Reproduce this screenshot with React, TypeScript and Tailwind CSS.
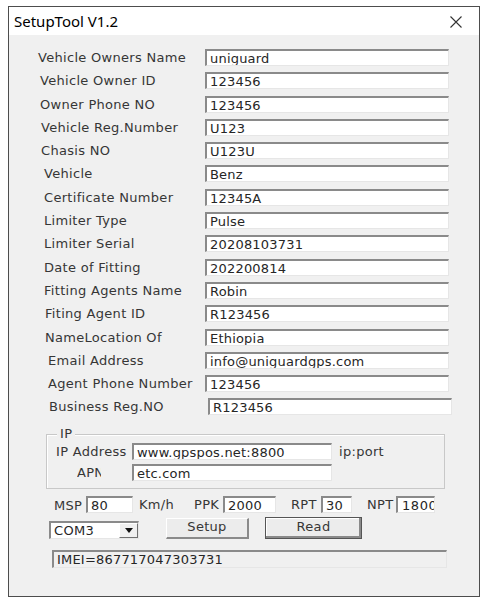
import React from 'react';

const rows: { label: string; value: string; pl: number }[] = [
  { label: 'Vehicle Owners Name', value: 'uniguard', pl: 29 },
  { label: 'Vehicle Owner ID', value: '123456', pl: 31 },
  { label: 'Owner Phone NO', value: '123456', pl: 31 },
  { label: 'Vehicle Reg.Number', value: 'U123', pl: 32 },
  { label: 'Chasis NO', value: 'U123U', pl: 32 },
  { label: 'Vehicle', value: 'Benz', pl: 35 },
  { label: 'Certificate Number', value: '12345A', pl: 35 },
  { label: 'Limiter Type', value: 'Pulse', pl: 35 },
  { label: 'Limiter Serial', value: '20208103731', pl: 35 },
  { label: 'Date of Fitting', value: '202200814', pl: 35 },
  { label: 'Fitting Agents Name', value: 'Robin', pl: 35 },
  { label: 'Fiting Agent ID', value: 'R123456', pl: 36 },
  { label: 'NameLocation Of', value: 'Ethiopia', pl: 36 },
  { label: 'Email Address', value: 'info@uniguardgps.com', pl: 39 },
  { label: 'Agent Phone Number', value: '123456', pl: 39 },
  { label: 'Business Reg.NO', value: 'R123456', pl: 40 }
];

const font = { fontFamily: '"DejaVu Sans", Verdana, sans-serif' };

function Field({ value, className = '', gray = false }: { value: string; className?: string; gray?: boolean }) {
  return (
    <div
      className={`h-[17px] shrink-0 overflow-hidden whitespace-nowrap border-t-2 border-l-2 border-t-[#8a8a8a] border-l-[#8a8a8a] border-r border-b border-r-[#e6e6e6] border-b-[#e6e6e6] pl-[3px] text-[13px] leading-[15px] tracking-[0.2px] text-[#262626] ${
        gray ? 'bg-[#f0f0f0]' : 'bg-white'
      } ${className}`}
    >
      {value}
    </div>
  );
}

export default function App() {
  return (
    <div className="min-h-[604px] bg-white pt-[6px] pl-[8px] text-[#363636]" style={font}>
      <div className="w-[472px] h-[591px] border border-[#4d4d4d] flex flex-col">
        {/* title bar */}
        <div className="h-[28px] bg-white flex items-center justify-between pl-[5px] pr-[17px] shrink-0">
          <span className="text-[15px] text-black" style={{ fontFamily: '"Noto Sans", "Open Sans", sans-serif' }}>
            SetupTool V1.2
          </span>
          <svg width="12" height="12" viewBox="0 0 12 12" className="mt-[2px]">
            <path d="M0.5 0.5 L11.5 11.5 M11.5 0.5 L0.5 11.5" stroke="#333" strokeWidth="1.1" fill="none" />
          </svg>
        </div>

        {/* client area */}
        <div className="flex-1 bg-[#f0f0f0] flex flex-col pt-[14px] text-[13px] tracking-[0.3px]">
          <div className="flex flex-col gap-[6.3px]">
            {rows.map((r, i) => (
              <div key={r.label} className="flex items-center h-[17px]">
                <div
                  className={`${i === 15 ? 'w-[199px]' : 'w-[196px]'} shrink-0 whitespace-nowrap leading-[15px]`}
                  style={{ paddingLeft: r.pl }}
                >
                  {r.label}
                </div>
                <Field value={r.value} className="w-[244px]" />
              </div>
            ))}
          </div>

          {/* IP group */}
          <div className="relative ml-[37px] mt-[19px] w-[399px] h-[55px] border border-[#c8c8c8] shadow-[inset_1px_1px_0_#fff] pt-[8px] flex flex-col gap-[4px]">
            <span className="absolute left-[10px] top-[-9px] px-[3px] bg-[#f0f0f0] leading-[16px]">IP</span>
            <div className="flex items-center h-[17px]">
              <div className="w-[85px] pl-[9px] whitespace-nowrap shrink-0 overflow-hidden">IP Address</div>
              <Field value="www.gpspos.net:8800" className="w-[200px]" />
              <span className="ml-[7px]">ip:port</span>
            </div>
            <div className="flex items-center h-[17px]">
              <div className="w-[85px] pl-[30px] shrink-0">
                <div className="w-[24px] overflow-hidden whitespace-nowrap">APN</div>
              </div>
              <Field value="etc.com" className="w-[200px]" />
            </div>
          </div>

          {/* MSP row */}
          <div className="flex items-center h-[17px] mt-[7px] pl-[45px] whitespace-nowrap">
            <span className="w-[32px] shrink-0 pt-[2px] overflow-hidden">MSP</span>
            <Field value="80" className="w-[47px]" />
            <span className="ml-[6px] w-[55px] shrink-0">Km/h</span>
            <span className="w-[29px] shrink-0 overflow-hidden">PPK</span>
            <Field value="2000" className="w-[53px]" />
            <span className="ml-[15px] w-[30px] shrink-0 overflow-hidden">RPT</span>
            <Field value="30" className="w-[31px]" />
            <span className="ml-[15px] w-[29px] shrink-0 overflow-hidden">NPT</span>
            <Field value="1800" className="w-[39px] !pl-[4px] !tracking-[0.6px]" />
          </div>

          {/* combo and buttons */}
          <div className="flex items-center h-[22px] mt-[4px] pl-[40px]">
            <div className="w-[90px] h-[18px] mt-[3px] flex border-t-2 border-l-2 border-t-[#8a8a8a] border-l-[#8a8a8a] border-r border-b border-r-[#e6e6e6] border-b-[#e6e6e6] bg-white">
              <div className="flex-1 pl-[3px] leading-[15px] text-[#262626]">COM3</div>
              <div className="w-[19px] h-full flex items-center justify-center bg-[#f0f0f0] border-r border-b border-r-[#707070] border-b-[#707070] border-t border-l border-t-white border-l-white">
                <svg width="8" height="5" viewBox="0 0 8 5">
                  <path d="M0 0 H8 L4 5 Z" fill="#111" />
                </svg>
              </div>
            </div>
            <button className="ml-[27px] w-[83px] h-[21px] bg-[#ececec] border-t border-l border-t-white border-l-white border-r-2 border-b-2 border-r-[#8a8a8a] border-b-[#8a8a8a] text-[#363636] leading-[15px] pb-[3px] tracking-[0.3px]" style={font}>
              Setup
            </button>
            <button className="ml-[16px] w-[97px] h-[22px] bg-[#ececec] border border-[#555] shadow-[inset_-2px_-2px_0_#8a8a8a,inset_1px_1px_0_#fff] text-[#363636] leading-[15px] pb-[4px] tracking-[0.3px]" style={font}>
              Read
            </button>
          </div>

          {/* IMEI */}
          <div className="mt-[11px] ml-[43px]">
            <Field value="IMEI=867717047303731" gray className="w-[395px] h-[18px]" />
          </div>
        </div>
      </div>
    </div>
  );
}
